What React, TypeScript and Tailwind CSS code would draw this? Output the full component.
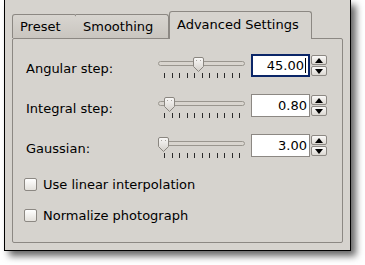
import React from 'react'

const font = { fontFamily: '"DejaVu Sans", Verdana, sans-serif' }

function Handle() {
  return (
    <svg width="11" height="15" viewBox="0 0 11 15" className="block">
      <defs>
        <linearGradient id="hg" x1="0" y1="0" x2="0" y2="1">
          <stop offset="0" stopColor="#fbfaf9" />
          <stop offset="1" stopColor="#d2cec8" />
        </linearGradient>
      </defs>
      <path d="M0.5 2 Q0.5 0.5 2 0.5 H9 Q10.5 0.5 10.5 2 V9.5 L5.5 14.5 L0.5 9.5 Z" fill="url(#hg)" stroke="#8a8680" />
      <rect x="3" y="3" width="1" height="1" fill="#a9a59f" />
      <rect x="7" y="3" width="1" height="1" fill="#a9a59f" />
    </svg>
  )
}

function Slider({ pos }: { pos: number }) {
  return (
    <div className="w-[87px] mt-[3px] shrink-0">
      <div className="relative h-[15px]">
        <div className="absolute left-0 right-0 top-[4px] h-[5px] rounded-full border border-[#9a968f] bg-[#d9d5cf]" />
        <div className="absolute top-0" style={{ left: pos }}>
          <Handle />
        </div>
      </div>
      <div className="flex justify-between ml-[6px] mr-[5px] mt-[1px]">
        {Array.from({ length: 11 }).map((_, i) => (
          <div key={i} className="w-px h-[5px] bg-[#2a2a2a]" />
        ))}
      </div>
    </div>
  )
}

function Spin({ value, focused }: { value: string; focused?: boolean }) {
  return (
    <div className="flex ml-[6px] h-[23px]">
      <div
        className={
          'w-[59px] h-[23px] bg-white flex items-center justify-end pr-[2px] text-[13px] text-black ' +
          (focused ? 'border-2 border-[#0b2668]' : 'border border-[#8c8883]')
        }
      >
        <span className="leading-none">{value}</span>
        {focused && <span className="ml-[1px] w-px h-[15px] bg-black" />}
      </div>
      <div className="flex flex-col ml-[1px] w-[16px] pt-[1px] gap-[1px]">
        <div className="h-[10px] border border-[#8c8883] rounded-[2px] bg-gradient-to-b from-[#fbfaf9] to-[#dcd8d2] flex items-center justify-center">
          <div className="w-0 h-0 border-l-[4px] border-r-[4px] border-b-[5px] border-l-transparent border-r-transparent border-b-black" />
        </div>
        <div className="h-[10px] border border-[#8c8883] rounded-[2px] bg-gradient-to-b from-[#fbfaf9] to-[#dcd8d2] flex items-center justify-center">
          <div className="w-0 h-0 border-l-[4px] border-r-[4px] border-t-[5px] border-l-transparent border-r-transparent border-t-black" />
        </div>
      </div>
    </div>
  )
}

function Row({ label, value, pos, focused }: { label: string; value: string; pos: number; focused?: boolean }) {
  return (
    <div className="flex items-start h-[23px]">
      <div className="flex-1 pl-[2px] mt-[7px] leading-[16px] text-[13px] text-black">{label}</div>
      <Slider pos={pos} />
      <Spin value={value} focused={focused} />
    </div>
  )
}

function Check({ label }: { label: string }) {
  return (
    <div className="flex items-center h-[17px]">
      <div className="w-[13px] h-[13px] rounded-[2px] border border-[#8c8883] bg-gradient-to-b from-white to-[#e4e1dc]" />
      <span className="ml-[6px] text-[13px] text-black leading-[17px]">{label}</span>
    </div>
  )
}

export default function App() {
  return (
    <div className="w-[365px] h-[265px] bg-white overflow-hidden" style={font}>
      <div className="ml-[4px] w-[347px] h-[251px] bg-[#d6d3ce] border-l border-r border-b border-black shadow-[5px_5px_7px_rgba(0,0,0,0.6)] px-[7px] pb-[7px] flex flex-col">
        {/* tabs */}
        <div className="flex items-end h-[39px] -mb-px relative z-10">
          <div className="w-[65px] h-[24px] mb-px border-l border-t border-r border-[#8c8883] rounded-t-[3px] bg-gradient-to-b from-[#d8d5d0] to-[#c9c5bf] pl-[7px] text-[13px] leading-[24px] text-black">
            Preset
          </div>
          <div className="w-[93px] -ml-px h-[24px] mb-px border-t border-r border-[#8c8883] rounded-tr-[3px] bg-gradient-to-b from-[#d8d5d0] to-[#c9c5bf] pl-[7px] text-[13px] leading-[24px] text-black">
            Smoothing
          </div>
          <div className="w-[143px] h-[28px] border-l border-t border-r border-[#8c8883] rounded-t-[3px] bg-[#d6d3ce] pl-[7px] text-[13px] leading-[26px] text-black">
            Advanced Settings
          </div>
        </div>
        {/* frame */}
        <div className="flex-1 border border-[#8c8883] rounded-[2px] pl-[11px] pr-[15px] pt-[15px] flex flex-col">
          <div className="flex flex-col gap-[17px]">
            <Row label="Angular step:" value="45.00" pos={35} focused />
            <Row label="Integral step:" value="0.80" pos={6} />
            <Row label="Gaussian:" value="3.00" pos={0} />
          </div>
          <div className="flex flex-col gap-[14px] mt-[19px]">
            <Check label="Use linear interpolation" />
            <Check label="Normalize photograph" />
          </div>
        </div>
      </div>
    </div>
  )
}
